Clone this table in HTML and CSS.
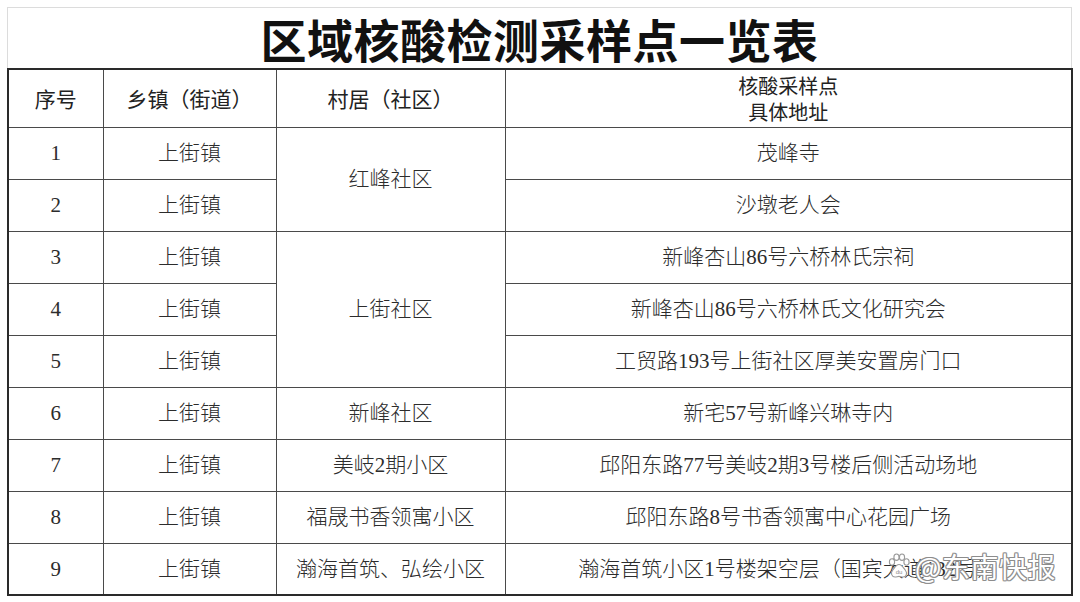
FILE: index.html
```html
<!DOCTYPE html>
<html lang="zh-CN">
<head>
<meta charset="utf-8">
<title>区域核酸检测采样点一览表</title>
<link rel="stylesheet" href="styles.css">
</head>
<body>
<div class="page">
  <div class="title">区域核酸检测采样点一览表</div>
  <table class="sheet">
    <colgroup>
      <col class="c1"><col class="c2"><col class="c3"><col class="c4">
    </colgroup>
    <thead>
      <tr class="head">
        <th>序号</th>
        <th>乡镇（街道）</th>
        <th>村居（社区）</th>
        <th class="two"><span class="ln">核酸采样点</span><span class="ln">具体地址</span></th>
      </tr>
    </thead>
    <tbody>
      <tr><td>1</td><td>上街镇</td><td rowspan="2">红峰社区</td><td>茂峰寺</td></tr>
      <tr><td>2</td><td>上街镇</td><td>沙墩老人会</td></tr>
      <tr><td>3</td><td>上街镇</td><td rowspan="3">上街社区</td><td>新峰杏山86号六桥林氏宗祠</td></tr>
      <tr><td>4</td><td>上街镇</td><td>新峰杏山86号六桥林氏文化研究会</td></tr>
      <tr><td>5</td><td>上街镇</td><td>工贸路193号上街社区厚美安置房门口</td></tr>
      <tr><td>6</td><td>上街镇</td><td>新峰社区</td><td>新宅57号新峰兴琳寺内</td></tr>
      <tr><td>7</td><td>上街镇</td><td>美岐2期小区</td><td>邱阳东路77号美岐2期3号楼后侧活动场地</td></tr>
      <tr><td>8</td><td>上街镇</td><td>福晟书香领寓小区</td><td>邱阳东路8号书香领寓中心花园广场</td></tr>
      <tr><td>9</td><td>上街镇</td><td>瀚海首筑、弘绘小区</td><td>瀚海首筑小区1号楼架空层（国宾大道132号）</td></tr>
    </tbody>
  </table>
  <div class="mark">
    <svg class="paw" viewBox="0 0 24 26" width="24" height="26">
      <g fill="#fff" stroke="#9a9a9a" stroke-width="1.1">
        <ellipse cx="5" cy="9" rx="2.6" ry="3.2"/>
        <ellipse cx="9.5" cy="4.2" rx="2.6" ry="3.2"/>
        <ellipse cx="15" cy="4.2" rx="2.6" ry="3.2"/>
        <ellipse cx="19.5" cy="9" rx="2.6" ry="3.2"/>
        <path d="M12 11.5c-3 0-4.5 3.5-6.5 6-2 2.5-1 6.5 2.5 6.5 1.6 0 2.6-.6 4-.6s2.4.6 4 .6c3.5 0 4.5-4 2.5-6.5-2-2.5-3.5-6-6.5-6z"/>
      </g>
      <text x="12" y="21" text-anchor="middle" font-size="6" fill="#8a8a8a" font-family="Liberation Sans, sans-serif">du</text>
    </svg>
    <span class="mark-text">@东南快报</span>
  </div>
</div>
</body>
</html>
```

FILE: styles.css
```css
html, body {
  margin: 0;
  padding: 0;
  background: #fff;
}

.page {
  position: relative;
  width: 1080px;
  height: 602px;
  padding: 7px 0 0 7px;
  box-sizing: border-box;
  font-family: "Liberation Serif", "Noto Sans CJK SC", serif;
  color: #2a2a2a;
}

.title {
  width: 1065px;
  height: 61px;
  box-sizing: border-box;
  border: 1px solid #dcdcdc;
  border-bottom: none;
  display: flex;
  align-items: center;
  justify-content: center;
  font-family: "Noto Sans CJK SC", sans-serif;
  font-weight: 700;
  font-size: 46px;
  letter-spacing: 0.5px;
  color: #111;
  padding-top: 0;
}

.sheet {
  width: 1066px;
  border-collapse: collapse;
  table-layout: fixed;
  border: 2px solid #2a2a2a;
}

.c1 { width: 95px; }
.c2 { width: 173px; }
.c3 { width: 229px; }
.c4 { width: auto; }

.sheet thead tr { height: 58px; }
.sheet tbody tr { height: 52px; }

.sheet th,
.sheet td {
  border: 1.5px solid #4a4a4a;
  text-align: center;
  vertical-align: middle;
  padding: 0;
  font-weight: 400;
  font-size: 21px;
  line-height: 24px;
}

.sheet th {
  font-family: "Noto Sans CJK SC", sans-serif;
  color: #222;
}

.sheet th.two {
  font-size: 20px;
  padding-top: 1px;
}

.ln {
  display: block;
  line-height: 26px;
  height: 26px;
}

.sheet td {
  font-family: "Liberation Serif", "Noto Sans CJK SC", serif;
  font-weight: 300;
  color: #2c2c2c;
}

.mark {
  position: absolute;
  left: 887px;
  top: 546px;
  display: flex;
  align-items: center;
  gap: 4px;
}

.paw {
  display: block;
}

.mark-text {
  font-family: "Noto Sans CJK SC", sans-serif;
  font-size: 28px;
  font-weight: 400;
  color: #fff;
  letter-spacing: 0.5px;
  text-shadow:
    1px 0 0 #8c8c8c, -1px 0 0 #8c8c8c, 0 1px 0 #8c8c8c, 0 -1px 0 #8c8c8c,
    1px 1px 0 #9a9a9a, -1px -1px 0 #9a9a9a, 1px -1px 0 #9a9a9a, -1px 1px 0 #9a9a9a;
}
```
